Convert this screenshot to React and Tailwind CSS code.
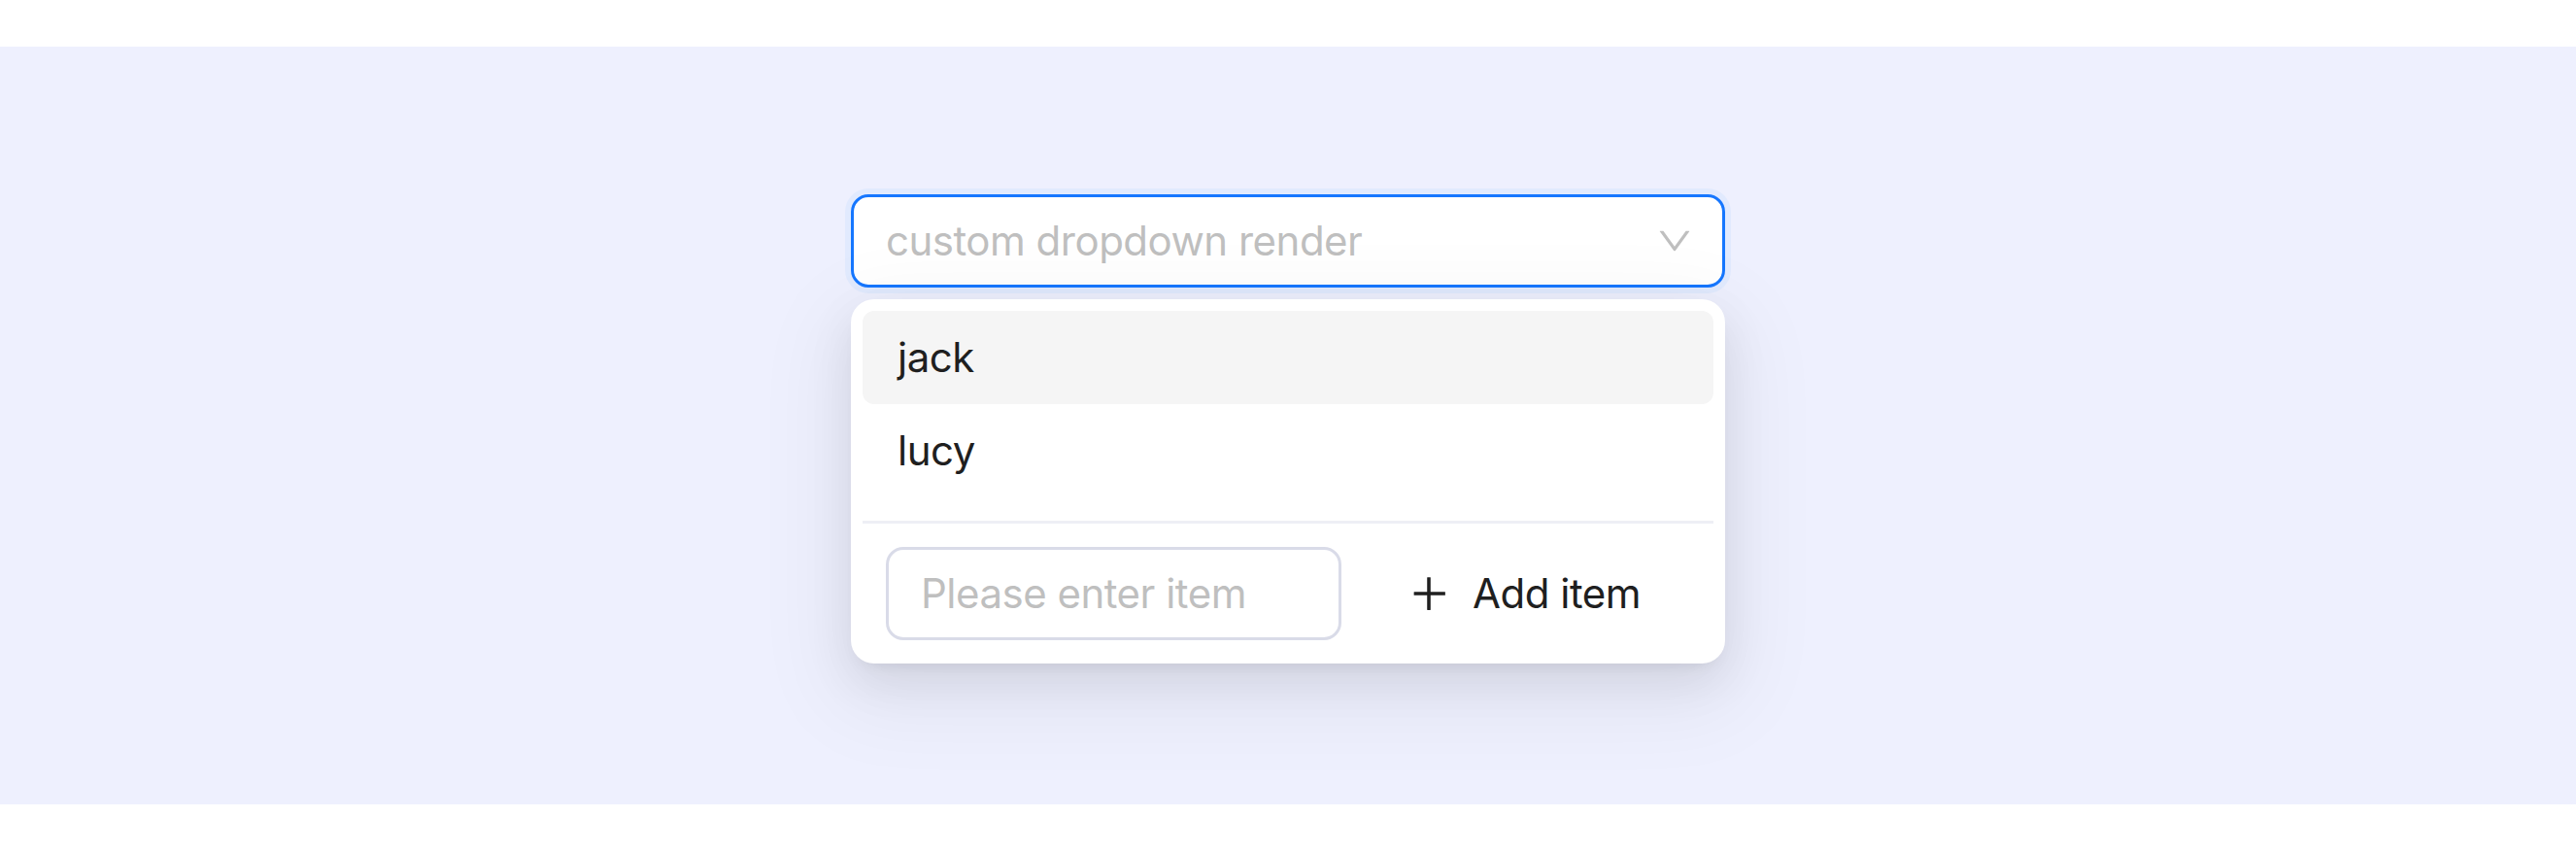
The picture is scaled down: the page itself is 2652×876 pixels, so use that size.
import React from "react";

const font = { fontFamily: "Inter, 'Noto Sans', 'Liberation Sans', sans-serif" };

function DownIcon() {
  return (
    <svg viewBox="64 64 896 896" className="w-[36px] h-[36px]" fill="#bfbfbf">
      <path d="M884 256h-75c-5.1 0-9.9 2.5-12.9 6.6L512 654.2 227.9 262.6c-3-4.1-7.8-6.6-12.9-6.6h-75c-6.5 0-10.3 7.4-6.5 12.7l352.6 486.1c12.8 17.6 39 17.6 51.7 0l352.6-486.1c3.9-5.3.1-12.7-6.4-12.7z" />
    </svg>
  );
}

function PlusIcon() {
  return (
    <svg viewBox="64 64 896 896" className="w-[42px] h-[42px]" fill="#1f1f1f">
      <path d="M482 152h60q8 0 8 8v704q0 8-8 8h-60q-8 0-8-8V160q0-8 8-8Z" />
      <path d="M192 474h672q8 0 8 8v60q0 8-8 8H192q-8 0-8-8v-60q0-8 8-8Z" />
    </svg>
  );
}

const options = ["jack", "lucy"];

export default function App() {
  return (
    <div className="h-[876px] bg-white pt-[48px] tracking-[-0.5px]" style={font}>
      <div className="h-[780px] bg-[#eef0fe] flex flex-col items-center pt-[152px]">
        {/* select */}
        <div className="w-[900px] h-[96px] bg-white border-[3px] border-[#1677ff] rounded-[18px] flex items-center justify-between pl-[33px] pr-[31px] shadow-[0_0_0_6px_rgba(5,145,255,0.05)]">
          <span className="text-[42px] leading-[66px] text-[#bfbfbf]">custom dropdown render</span>
          <DownIcon />
        </div>

        {/* dropdown */}
        <div className="mt-[12px] w-[900px] bg-white rounded-[24px] p-[12px] shadow-[0_18px_48px_0_rgba(0,0,0,0.08),0_9px_18px_-12px_rgba(0,0,0,0.12),0_27px_84px_24px_rgba(0,0,0,0.05)]">
          {options.map((o, i) => (
            <div
              key={o}
              className={
                "h-[96px] px-[36px] flex items-center rounded-[12px] text-[42px] leading-[66px] text-[#1f1f1f] " +
                (i === 0 ? "bg-[#f5f5f5]" : "")
              }
            >
              {o}
            </div>
          ))}
          <div className="h-[3px] bg-[#eeeff5] my-[24px]" />
          <div className="flex items-center gap-[24px] px-[24px] pb-[12px]">
            <div className="w-[469px] h-[96px] border-[3px] border-[#d9dbe8] rounded-[18px] flex items-center px-[33px]">
              <span className="text-[42px] leading-[66px] text-[#bfbfbf]">Please enter item</span>
            </div>
            <button className="h-[96px] px-[45px] flex items-center gap-[24px] rounded-[18px] text-[42px] leading-[66px] text-[#1f1f1f]">
              <PlusIcon />
              <span>Add item</span>
            </button>
          </div>
        </div>
      </div>
    </div>
  );
}
